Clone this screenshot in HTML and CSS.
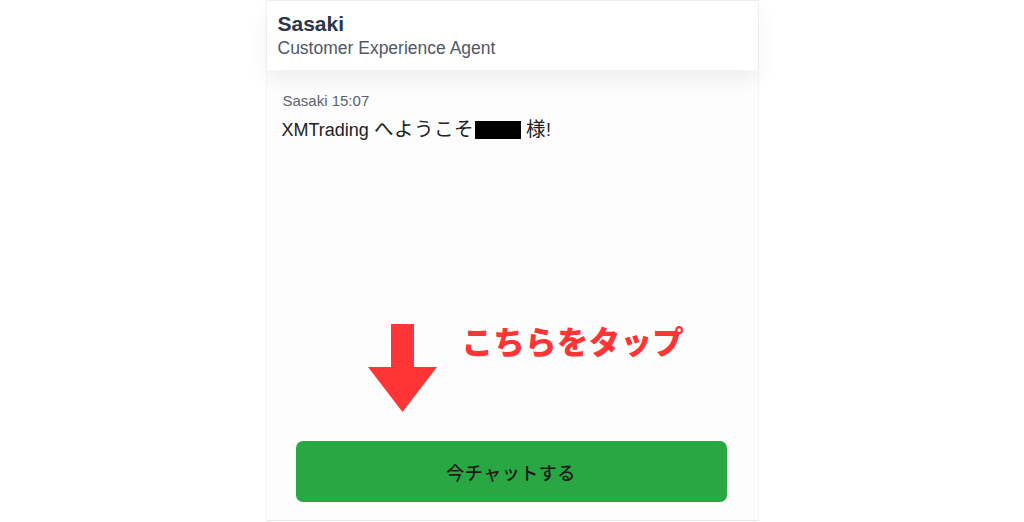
FILE: index.html
```html
<!DOCTYPE html>
<html lang="ja">
<head>
<meta charset="utf-8">
<title>Chat</title>
<link rel="stylesheet" href="styles.css">
</head>
<body>
<div class="panel">
  <header class="header">
    <div class="agent-name">Sasaki</div>
    <div class="agent-role">Customer Experience Agent</div>
  </header>
  <main class="messages">
    <div class="meta">Sasaki 15:07</div>
    <div class="text">XMTrading <span class="jp">へようこそ</span><span class="redact"></span> <span class="jp">様</span>!</div>
  </main>
  <div class="callout">
    <svg class="arrow" width="69" height="88" viewBox="0 0 69 88">
      <polygon points="23,0 46,0 46,43 69,43 34.5,88 0,43 23,43" fill="#ff3434"/>
    </svg>
    <div class="callout-text">こちらをタップ</div>
  </div>
  <div class="actions">
    <button class="chat-btn">今チャットする</button>
  </div>
</div>
</body>
</html>
```
FILE: styles.css
```css
html, body {
  margin: 0;
  padding: 0;
  background: #ffffff;
}
body {
  font-family: "Liberation Sans", Arial, "Noto Sans CJK JP", sans-serif;
}
.panel {
  width: 493px;
  height: 521px;
  margin: 0 auto;
  box-sizing: border-box;
  border-top: 1px solid #efefef;
  border-bottom: 1px solid #e6e6e6;
  border-left: 1px solid #f4f4f4;
  border-right: 1px solid #f4f4f4;
  background: #fdfdfd;
  display: flex;
  flex-direction: column;
}
.header {
  height: 69px;
  box-sizing: border-box;
  padding: 10px 11px 0;
  background: #ffffff;
  box-shadow: 0 10px 20px rgba(0, 0, 0, 0.06);
  position: relative;
  z-index: 1;
}
.agent-name {
  font-size: 21px;
  font-weight: 700;
  color: #2c3646;
  line-height: 26px;
}
.agent-role {
  font-size: 17.5px;
  color: #505864;
  line-height: 22px;
}
.messages {
  padding: 21px 15px 0;
  flex: 1;
}
.meta {
  font-size: 15px;
  color: #5b626c;
  line-height: 20px;
  padding-left: 1px;
}
.text {
  margin-top: 4px;
  font-size: 18px;
  color: #222222;
  line-height: 28px;
  white-space: nowrap;
}
.jp {
  font-size: 19.5px;
  letter-spacing: 0.5px;
}
.redact {
  display: inline-block;
  width: 46px;
  height: 18px;
  background: #000;
  margin-left: 1px;
  vertical-align: -3px;
}
.callout {
  display: flex;
  align-items: flex-start;
  padding-left: 101px;
  gap: 25px;
  height: 88px;
}
.arrow {
  display: block;
  flex: none;
}
.callout-text {
  font-family: "Noto Sans CJK JP", sans-serif;
  font-weight: 900;
  font-size: 31.5px;
  line-height: 36px;
  color: #ff3434;
  letter-spacing: 0.3px;
  margin-top: -2px;
}
.actions {
  padding: 29px 31px 18px 29px;
}
.chat-btn {
  display: block;
  width: 431px;
  height: 61px;
  border: none;
  border-radius: 7px;
  background: #29a743;
  color: #1b1b1b;
  font-family: "Noto Sans CJK JP", sans-serif;
  font-size: 18px;
  font-weight: 500;
  letter-spacing: 0.5px;
  padding: 0;
}
```
